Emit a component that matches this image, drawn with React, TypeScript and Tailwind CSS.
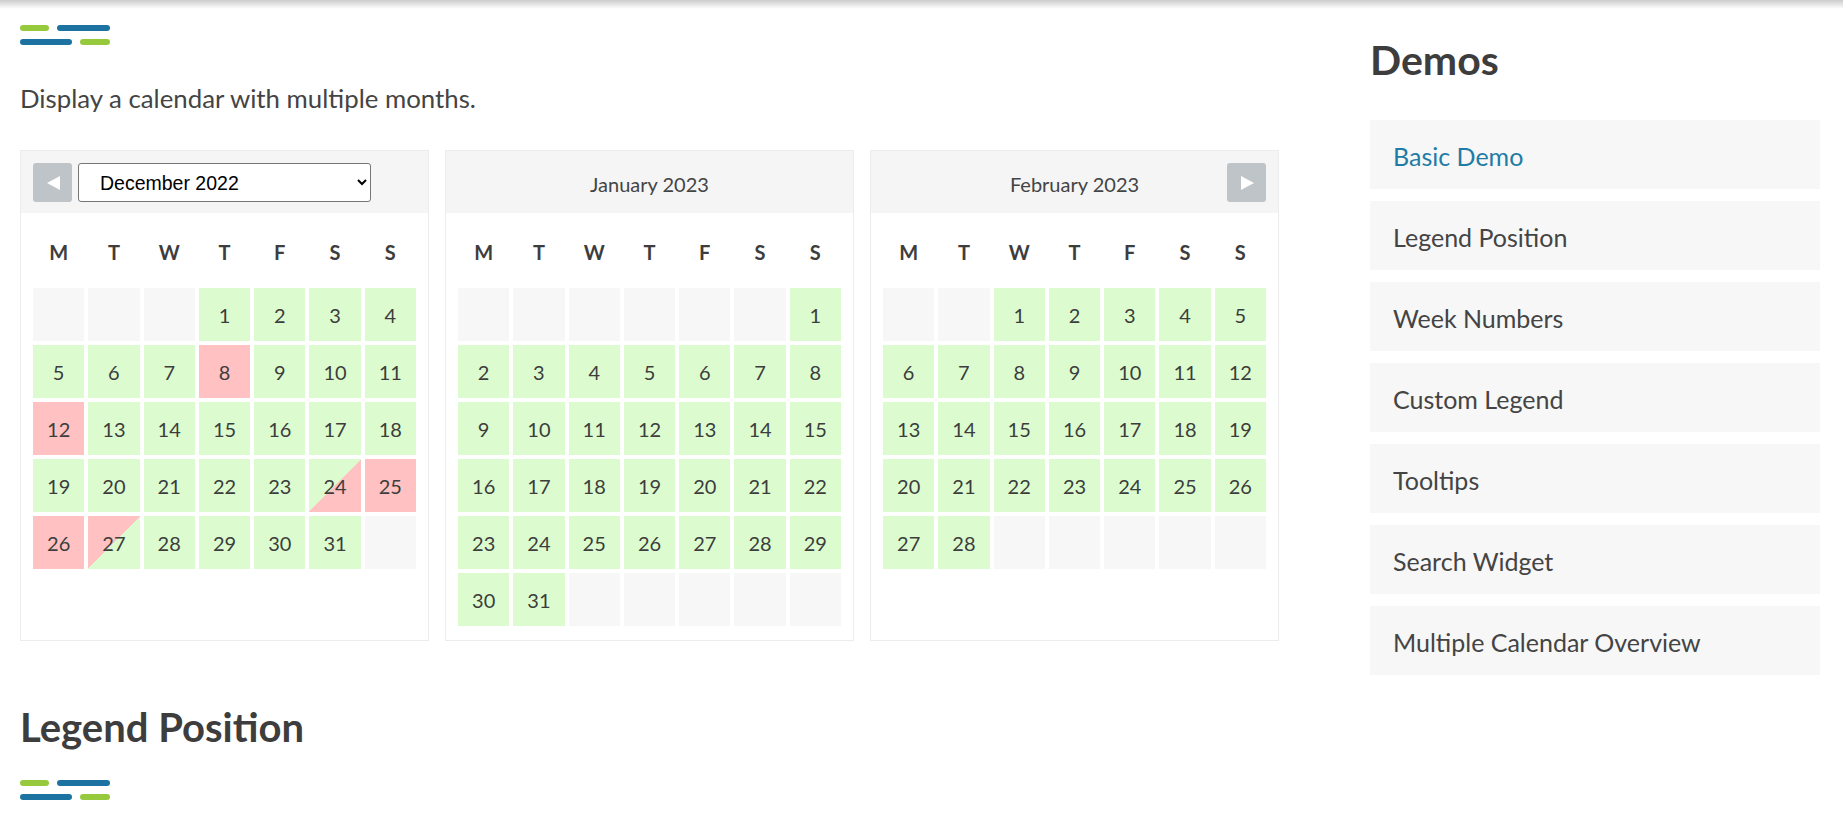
import React from "react";

type Day = { n?: number; kind?: "ok" | "busy" | "pm" | "am" };

const weekdays = ["M", "T", "W", "T", "F", "S", "S"];

function buildMonth(offset: number, days: number, total: number, marks: Record<number, Day["kind"]> = {}): Day[] {
  const cells: Day[] = [];
  for (let i = 0; i < offset; i++) cells.push({});
  for (let d = 1; d <= days; d++) cells.push({ n: d, kind: marks[d] || "ok" });
  while (cells.length < total) cells.push({});
  return cells;
}

const months = [
  { title: "December 2022", cells: buildMonth(3, 31, 35, { 8: "busy", 12: "busy", 24: "pm", 25: "busy", 26: "busy", 27: "am" }) },
  { title: "January 2023", cells: buildMonth(6, 31, 42) },
  { title: "February 2023", cells: buildMonth(2, 28, 35) },
];

const demos = [
  "Basic Demo",
  "Legend Position",
  "Week Numbers",
  "Custom Legend",
  "Tooltips",
  "Search Widget",
  "Multiple Calendar Overview",
];

function Dashes() {
  return (
    <div className="flex flex-col gap-[8px] w-[90px]">
      <div className="flex gap-[8px]">
        <span className="h-[6px] w-[29px] rounded-full bg-[#97c93d]" />
        <span className="h-[6px] w-[53px] rounded-full bg-[#1c72a0]" />
      </div>
      <div className="flex gap-[8px]">
        <span className="h-[6px] w-[52px] rounded-full bg-[#1c72a0]" />
        <span className="h-[6px] w-[30px] rounded-full bg-[#97c93d]" />
      </div>
    </div>
  );
}

function NavButton({ dir }: { dir: "prev" | "next" }) {
  return (
    <button
      type="button"
      aria-label={dir === "prev" ? "Previous month" : "Next month"}
      className="flex h-[39px] w-[39px] shrink-0 items-center justify-center rounded-[3px] bg-[#bfc4c8]"
    >
      <svg width="16" height="14" viewBox="0 0 16 14">
        {dir === "prev" ? (
          <polygon points="15,0 15,14 2,7" fill="#fff" />
        ) : (
          <polygon points="2,0 2,14 15,7" fill="#fff" />
        )}
      </svg>
    </button>
  );
}

function DayCell({ day }: { day: Day }) {
  const base = "flex h-[53px] items-center justify-center text-[20px] text-[#3d3d3d]";
  if (!day.n) return <div className={`${base} bg-[#f7f7f7]`} />;
  const bg =
    day.kind === "busy"
      ? "bg-[#ffc1c1]"
      : day.kind === "pm"
      ? "bg-[linear-gradient(to_bottom_right,#dcfccf_50%,#ffc1c1_50%)]"
      : day.kind === "am"
      ? "bg-[linear-gradient(to_bottom_right,#ffc1c1_50%,#dcfccf_50%)]"
      : "bg-[#dcfccf]";
  return <div className={`${base} ${bg}`}>{day.n}</div>;
}

function MonthCard({ title, cells, index }: { title: string; cells: Day[]; index: number }) {
  return (
    <div className="border border-[#ececec] pb-[14px]">
      <div className="flex h-[62px] items-center gap-[6px] bg-[#f5f5f5] px-[12px] pt-[1px]">
        {index === 0 ? (
          <>
            <NavButton dir="prev" />
            <select
              defaultValue={title}
              className="h-[39px] w-[293px] rounded-[3px] border border-[#767676] bg-white pl-[17px] text-[19.5px] text-black font-['Liberation_Sans',Arial,sans-serif]"
            >
              <option>November 2022</option>
              <option>December 2022</option>
              <option>January 2023</option>
            </select>
          </>
        ) : (
          <>
            <div className="w-[39px] shrink-0" />
            <div className="flex-1 pt-[2px] text-center text-[20px] text-[#444]">{title}</div>
            {index === 2 ? <NavButton dir="next" /> : <div className="w-[39px] shrink-0" />}
          </>
        )}
      </div>
      <div className="px-[12px] pt-[21px]">
        <div className="mb-[18px] grid grid-cols-7 gap-[4px]">
          {weekdays.map((w, i) => (
            <div key={i} className="h-[36px] text-center text-[20px] font-bold leading-[36px] text-[#3d3d3d]">
              {w}
            </div>
          ))}
        </div>
        <div className="grid grid-cols-7 gap-[4px]">
          {cells.map((d, i) => (
            <DayCell key={i} day={d} />
          ))}
        </div>
      </div>
    </div>
  );
}

export default function App() {
  return (
    <div className="min-h-screen bg-white text-[#444] font-['Lato','Noto_Sans',sans-serif]">
      <div className="h-[9px] bg-gradient-to-b from-[#cccccc] to-white" />
      <div className="flex pl-[20px] pt-[16px]">
        <main className="w-[1259px] shrink-0">
          <Dashes />
          <p className="mt-[38px] text-[25.8px] leading-[30px]">Display a calendar with multiple months.</p>
          <div className="mt-[37px] grid grid-cols-3 gap-[16px]">
            {months.map((m, i) => (
              <MonthCard key={m.title} title={m.title} cells={m.cells} index={i} />
            ))}
          </div>
          <h2 className="mt-[62px] text-[40px] font-bold leading-[1.2] text-[#3d3d3d]">Legend Position</h2>
          <div className="mt-[29px]">
            <Dashes />
          </div>
        </main>
        <aside className="ml-[91px] w-[450px] shrink-0">
          <h2 className="mt-[10px] text-[41px] font-bold leading-[1.2] text-[#3d3d3d]">Demos</h2>
          <ul className="mt-[36px] flex flex-col gap-[12px]">
            {demos.map((d, i) => (
              <li key={d}>
                <a
                  href="#"
                  className={`flex h-[69px] items-center bg-[#f7f7f7] pl-[23px] pt-[4px] text-[25px] ${
                    i === 0 ? "text-[#1f7ca6]" : "text-[#444]"
                  }`}
                >
                  {d}
                </a>
              </li>
            ))}
          </ul>
        </aside>
      </div>
    </div>
  );
}
